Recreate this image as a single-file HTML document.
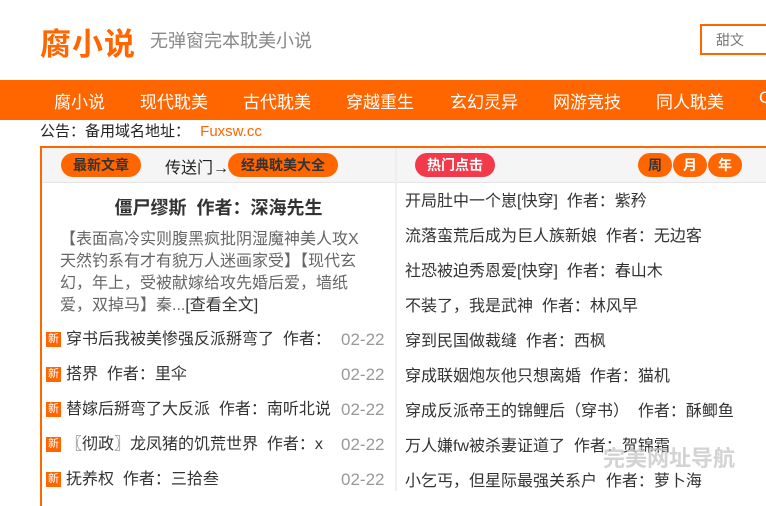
<!DOCTYPE html>
<html><head><meta charset="utf-8"><style>
*{margin:0;padding:0;box-sizing:border-box}
body{width:766px;height:491px;overflow:hidden;background:#fff;font-family:"Liberation Sans","Noto Sans CJK SC",sans-serif;position:relative;color:#333}
.a{position:absolute;white-space:nowrap}
.logo{left:40px;top:19px;font-size:31px;font-weight:bold;color:#f60;letter-spacing:1px}
.sub{left:150px;top:27px;font-size:18px;color:#888}
.search{left:700px;top:24px;width:80px;height:31px;border:2px solid #f60;font-size:14px;color:#777;padding:4px 0 0 14px}
.nav{left:0;top:80px;width:766px;height:40px;background:#f60}
.nav span{position:absolute;top:8px;color:#fff;font-size:17px}
.notice{left:40px;top:120px;font-size:15px;color:#222}
.box{left:40px;top:146px;width:740px;height:360px;border-top:2px solid #f60;border-left:2px solid #f60}
.hd{left:42px;top:148px;width:724px;height:35px;background:#f5f5f5;border-bottom:1px solid #e5e5e5}
.div{left:395px;top:148px;width:2px;height:343px;background:#eee}
.pill{position:absolute;height:24px;border-radius:12px;background:#f60;color:#333;font-weight:bold;font-size:14px;text-align:center;line-height:24px}
.row{position:absolute;font-size:16px;color:#333;white-space:nowrap;overflow:hidden;line-height:22px}
.ic{position:absolute;width:15px;height:15px;background:#f60;color:#fff;font-size:11px;line-height:15px;text-align:center}
.dt{position:absolute;top:0;font-size:17px;color:#999;background:#fff;padding-left:2px;line-height:22px}
</style></head><body>
<div class="a logo">腐小说</div>
<div class="a sub">无弹窗完本耽美小说</div>
<div class="a search">甜文</div>
<div class="a nav">
<span style="left:54px">腐小说</span><span style="left:140px">现代耽美</span><span style="left:243px">古代耽美</span><span style="left:346px">穿越重生</span><span style="left:450px">玄幻灵异</span><span style="left:553px">网游竞技</span><span style="left:656px">同人耽美</span><span style="left:759px">G</span>
</div>
<div class="a notice">公告：备用域名地址： <span style="color:#f60;margin-left:6px">Fuxsw.cc</span></div>
<div class="a box"></div>
<div class="a hd"></div>
<div class="a div"></div>
<div class="pill" style="left:61px;top:153px;width:80px">最新文章</div>
<div class="a" style="left:165px;top:154px;font-size:16px;color:#222">传送门→</div>
<div class="pill" style="left:228px;top:153px;width:110px">经典耽美大全</div>
<div class="pill" style="left:415px;top:153px;width:80px;background:#f23a4a;color:#fff">热门点击</div>
<div class="pill" style="left:638px;top:153px;width:34px;border-radius:17px">周</div>
<div class="pill" style="left:673px;top:153px;width:34px;border-radius:17px;color:#fff">月</div>
<div class="pill" style="left:708px;top:153px;width:34px;border-radius:17px;color:#fff">年</div>
<div class="a" style="left:42px;width:353px;top:194px;text-align:center;font-size:18px;font-weight:bold;color:#333">僵尸缪斯&nbsp; 作者：深海先生</div>
<div class="a" style="left:60px;top:229px;width:302px;white-space:normal;font-size:16px;line-height:22px;color:#666">【表面高冷实则腹黑疯批阴湿魔神美人攻X天然钓系有才有貌万人迷画家受】【现代玄幻，年上，受被献嫁给攻先婚后爱，墙纸爱，双掉马】秦...<span style="color:#333">[查看全文]</span></div>
<div class="row" style="left:46px;top:329px;width:345px;height:24px"><span class="ic" style="top:3px">新</span><span style="position:absolute;left:20px">穿书后我被美惨强反派掰弯了&nbsp; 作者：</span><span class="dt" style="left:293px">02-22</span></div>
<div class="row" style="left:46px;top:364px;width:345px;height:24px"><span class="ic" style="top:3px">新</span><span style="position:absolute;left:20px">搭界&nbsp; 作者：里伞</span><span class="dt" style="left:293px">02-22</span></div>
<div class="row" style="left:46px;top:399px;width:345px;height:24px"><span class="ic" style="top:3px">新</span><span style="position:absolute;left:20px">替嫁后掰弯了大反派&nbsp; 作者：南听北说</span><span class="dt" style="left:293px">02-22</span></div>
<div class="row" style="left:46px;top:434px;width:345px;height:24px"><span class="ic" style="top:3px">新</span><span style="position:absolute;left:20px">〖彻政〗龙凤猪的饥荒世界&nbsp; 作者：x</span><span class="dt" style="left:293px">02-22</span></div>
<div class="row" style="left:46px;top:469px;width:345px;height:24px"><span class="ic" style="top:3px">新</span><span style="position:absolute;left:20px">抚养权&nbsp; 作者：三拾叁</span><span class="dt" style="left:293px">02-22</span></div>
<div class="row" style="left:405px;top:191px">开局肚中一个崽[快穿]&nbsp; 作者：紫矜</div>
<div class="row" style="left:405px;top:226px">流落蛮荒后成为巨人族新娘&nbsp; 作者：无边客</div>
<div class="row" style="left:405px;top:261px">社恐被迫秀恩爱[快穿]&nbsp; 作者：春山木</div>
<div class="row" style="left:405px;top:296px">不装了，我是武神&nbsp; 作者：林风早</div>
<div class="row" style="left:405px;top:331px">穿到民国做裁缝&nbsp; 作者：西枫</div>
<div class="row" style="left:405px;top:366px">穿成联姻炮灰他只想离婚&nbsp; 作者：猫机</div>
<div class="row" style="left:405px;top:401px">穿成反派帝王的锦鲤后（穿书）&nbsp; 作者：酥鲫鱼</div>
<div class="row" style="left:405px;top:436px">万人嫌fw被杀妻证道了&nbsp; 作者：贺锦霜</div>
<div class="row" style="left:405px;top:471px">小乞丐，但星际最强关系户&nbsp; 作者：萝卜海</div>
<div class="a" style="left:603px;top:441px;font-size:22px;font-weight:bold;color:rgba(200,200,200,0.8)">完美网址导航</div>
</body></html>
